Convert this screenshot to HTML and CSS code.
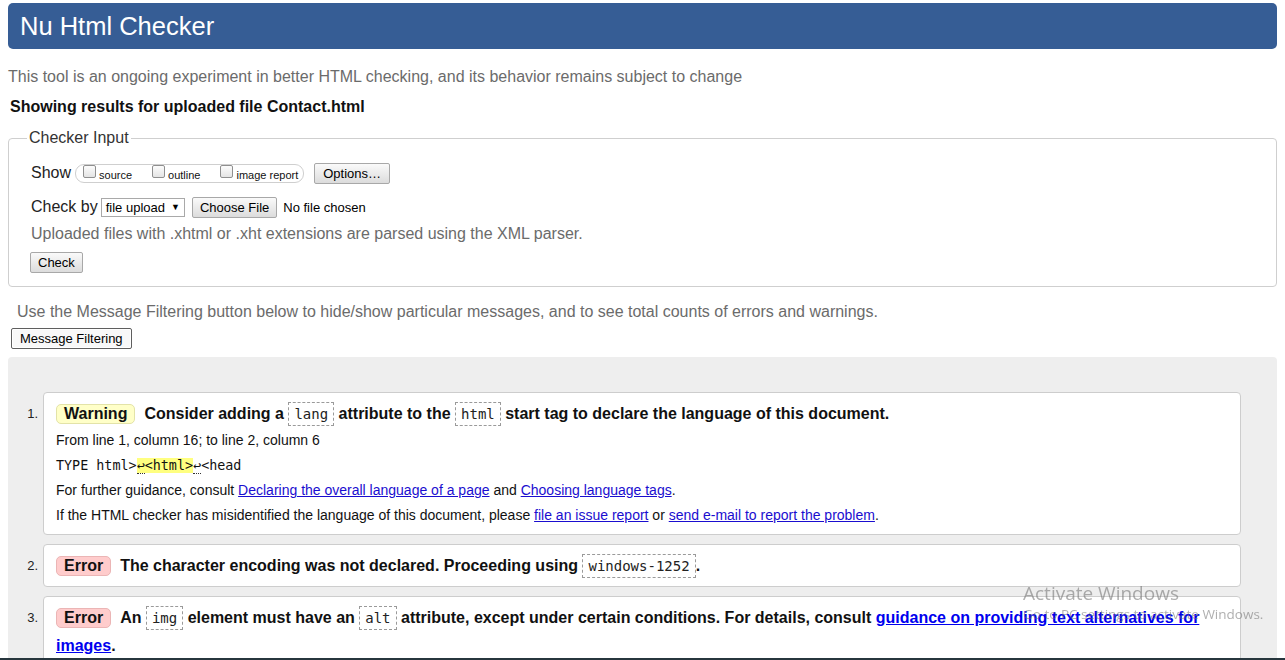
FILE: index.html
```html
<!DOCTYPE html>
<html lang="en">
<head>
<meta charset="utf-8">
<title>Nu Html Checker</title>
<link rel="stylesheet" href="styles.css">
</head>
<body>
<h1 class="title">Nu Html Checker</h1>
<p class="intro">This tool is an ongoing experiment in better HTML checking, and its behavior remains subject to change</p>
<p class="showing">Showing results for uploaded file Contact.html</p>

<fieldset class="input">
  <legend class="legend">Checker Input</legend>
  <div class="row row-show">
    <span class="lbl">Show</span>
    <span class="pill">
      <span class="opt"><span class="cb"></span><span class="optlbl">source</span></span>
      <span class="opt"><span class="cb"></span><span class="optlbl">outline</span></span>
      <span class="opt"><span class="cb"></span><span class="optlbl">image report</span></span>
    </span>
    <button class="btn btn-options" type="button">Options…</button>
  </div>
  <div class="row row-by">
    <span class="lbl">Check by</span>
    <span class="select">file upload <span class="arrow">▼</span></span>
    <button class="btn btn-file" type="button">Choose File</button>
    <span class="nofile">No file chosen</span>
  </div>
  <p class="hint">Uploaded files with .xhtml or .xht extensions are parsed using the XML parser.</p>
  <div class="row row-check">
    <button class="btn btn-check" type="button">Check</button>
  </div>
</fieldset>

<p class="filter-note">Use the Message Filtering button below to hide/show particular messages, and to see total counts of errors and warnings.</p>
<button class="btn-filter" type="button">Message Filtering</button>

<div class="results">
  <ol class="msgs">
    <li class="item">
      <span class="num">1.</span>
      <div class="box">
        <p class="msg"><span class="badge warn">Warning</span>Consider adding a <code class="c">lang</code> attribute to the <code class="c">html</code> start tag to declare the language of this document.</p>
        <p class="det">From line 1, column 16; to line 2, column 6</p>
        <p class="det ext"><span>TYPE html&gt;</span><mark class="hl"><span class="lf">↩</span>&lt;html&gt;</mark><span class="lf">↩</span><span>&lt;head</span></p>
        <p class="det">For further guidance, consult <a href="#">Declaring the overall language of a page</a> and <a href="#">Choosing language tags</a>.</p>
        <p class="det">If the HTML checker has misidentified the language of this document, please <a href="#">file an issue report</a> or <a href="#">send e-mail to report the problem</a>.</p>
      </div>
    </li>
    <li class="item">
      <span class="num">2.</span>
      <div class="box">
        <p class="msg"><span class="badge err">Error</span>The character encoding was not declared. Proceeding using <code class="c">windows-1252</code>.</p>
      </div>
    </li>
    <li class="item">
      <span class="num">3.</span>
      <div class="box">
        <p class="msg"><span class="badge err">Error</span>An <code class="c">img</code> element must have an <code class="c">alt</code> attribute, except under certain conditions. For details, consult <a href="#">guidance on providing text alternatives for images</a>.</p>
      </div>
    </li>
  </ol>
</div>

<div class="watermark">
  <div class="wm1">Activate Windows</div>
  <div class="wm2">Go to PC settings to activate Windows.</div>
</div>
<div class="taskbar"></div>
</body>
</html>
```
FILE: styles.css
```css
html, body {
  margin: 0;
  padding: 0;
}
body {
  padding: 0 8px;
  font-family: "Liberation Sans", Arial, sans-serif;
  font-size: 16px;
  color: #000;
  background: #fff;
}
.title {
  margin: 3px 0 0;
  height: 46px;
  line-height: 46px;
  padding-left: 12px;
  background: #365d95;
  color: #fff;
  font-size: 25.5px;
  font-weight: normal;
  border-radius: 5px;
}
.intro {
  margin: 18px 0 0;
  line-height: 20px;
  color: #6b6b6b;
}
.showing {
  margin: 10px 0 0;
  padding-left: 2px;
  line-height: 20px;
  font-weight: bold;
  color: #111;
}
.input {
  margin: 12px 0 0;
  padding: 0 22px 13px;
  border: 1px solid #cfcfcf;
  border-radius: 4px;
}
.legend {
  margin-left: -4px;
  padding: 0 2px;
  line-height: 18px;
  color: #333;
}
.row {
  display: flex;
  align-items: center;
  height: 22px;
}
.row-show {
  margin-top: 15px;
}
.row-by {
  margin-top: 12px;
}
.lbl {
  color: #222;
}
.pill {
  display: inline-flex;
  align-items: center;
  height: 17px;
  margin-left: 4px;
  padding: 0 5px 0 7px;
  border: 1px solid #cfcfcf;
  border-radius: 9px;
}
.opt {
  display: inline-flex;
  align-items: center;
  margin-right: 20px;
}
.opt:last-child {
  margin-right: 0;
}
.cb {
  display: inline-block;
  width: 11px;
  height: 11px;
  border: 1px solid #8f8f8f;
  border-radius: 2px;
  background: linear-gradient(#fcfcfc, #e4e4e4);
  margin-top: -3px;
}
.optlbl {
  font-size: 11px;
  margin-left: 3px;
  padding-top: 3px;
  color: #111;
}
.btn {
  font-family: "Liberation Sans", Arial, sans-serif;
  font-size: 13px;
  height: 21px;
  line-height: 17px;
  padding: 0 7px;
  border: 1px solid #a8a8a8;
  border-radius: 2px;
  background: linear-gradient(#fafafa, #dcdcdc);
  color: #000;
}
.btn-options {
  margin-left: 10px;
  padding: 0 8px;
}
.select {
  display: inline-flex;
  align-items: center;
  height: 17px;
  margin-left: 3px;
  padding: 0 4px;
  border: 1px solid #a9a9a9;
  font-size: 13px;
  background: #fff;
}
.arrow {
  font-size: 9px;
  margin-left: 6px;
}
.btn-file {
  margin-left: 7px;
}
.nofile {
  margin-left: 6px;
  font-size: 13px;
}
.hint {
  margin: 6px 0 0;
  line-height: 20px;
  color: #6b6b6b;
}
.row-check {
  margin-top: 8px;
  height: 21px;
  margin-left: -1px;
}
.filter-note {
  margin: 15px 0 0;
  padding-left: 9px;
  line-height: 20px;
  color: #6b6b6b;
}
.btn-filter {
  display: block;
  margin: 6px 0 0 3px;
  height: 21px;
  padding: 0 8px;
  font-family: "Liberation Sans", Arial, sans-serif;
  font-size: 13px;
  border: 1px solid #5f5f5f;
  border-radius: 2px;
  background: #f8f8f8;
  box-shadow: inset 0 0 0 1px #fff;
  color: #000;
}
.results {
  margin-top: 8px;
  background: #eee;
  border-radius: 4px 4px 0 0;
  min-height: 320px;
}
.msgs {
  list-style: none;
  margin: 0;
  padding: 35px 36px 0 0;
}
.item {
  display: flex;
  margin-bottom: 9px;
}
.num {
  flex: 0 0 35px;
  box-sizing: border-box;
  padding: 8px 5px 0 0;
  text-align: right;
  font-size: 13px;
  line-height: 28px;
  color: #222;
}
.box {
  flex: 1;
  background: #fff;
  border: 1px solid #cdcdcd;
  border-radius: 4px;
  padding: 7px 12px 6px;
}
.msg {
  margin: 0;
  line-height: 28px;
  font-weight: bold;
  color: #111;
}
.badge {
  display: inline-block;
  line-height: 18px;
  padding: 0 7px;
  border-radius: 5px;
  margin-right: 9px;
}
.warn {
  background: #ffffc8;
  border: 1px solid #e3e3a8;
}
.err {
  background: #ffcccc;
  border: 1px solid #ebb5b5;
}
.c {
  font-family: "DejaVu Sans Mono", monospace;
  font-size: 14px;
  font-weight: normal;
  line-height: 16px;
  padding: 3px 5px;
  border: 1px dashed #9a9a9a;
  color: #222;
}
.det {
  margin: 0;
  font-size: 14px;
  line-height: 25px;
  color: #111;
}
.ext {
  font-family: "DejaVu Sans Mono", monospace;
  font-size: 13.4px;
}
.hl {
  background: #ffff80;
  color: #111;
}
.lf {
  border-bottom: 1px dotted #333;
}
a {
  color: #1a0dcf;
}
.msg a {
  color: #0000ee;
}
.watermark {
  position: fixed;
  left: 1023px;
  top: 582px;
  font-family: "Open Sans", "Noto Sans", sans-serif;
  color: rgba(110, 110, 110, 0.55);
  pointer-events: none;
}
.wm1 {
  font-size: 19px;
  line-height: 22px;
}
.wm2 {
  font-size: 13.5px;
  line-height: 20px;
  white-space: nowrap;
}
.taskbar {
  position: fixed;
  left: 0;
  right: 0;
  bottom: 0;
  height: 2px;
  background: #27363d;
}
```
